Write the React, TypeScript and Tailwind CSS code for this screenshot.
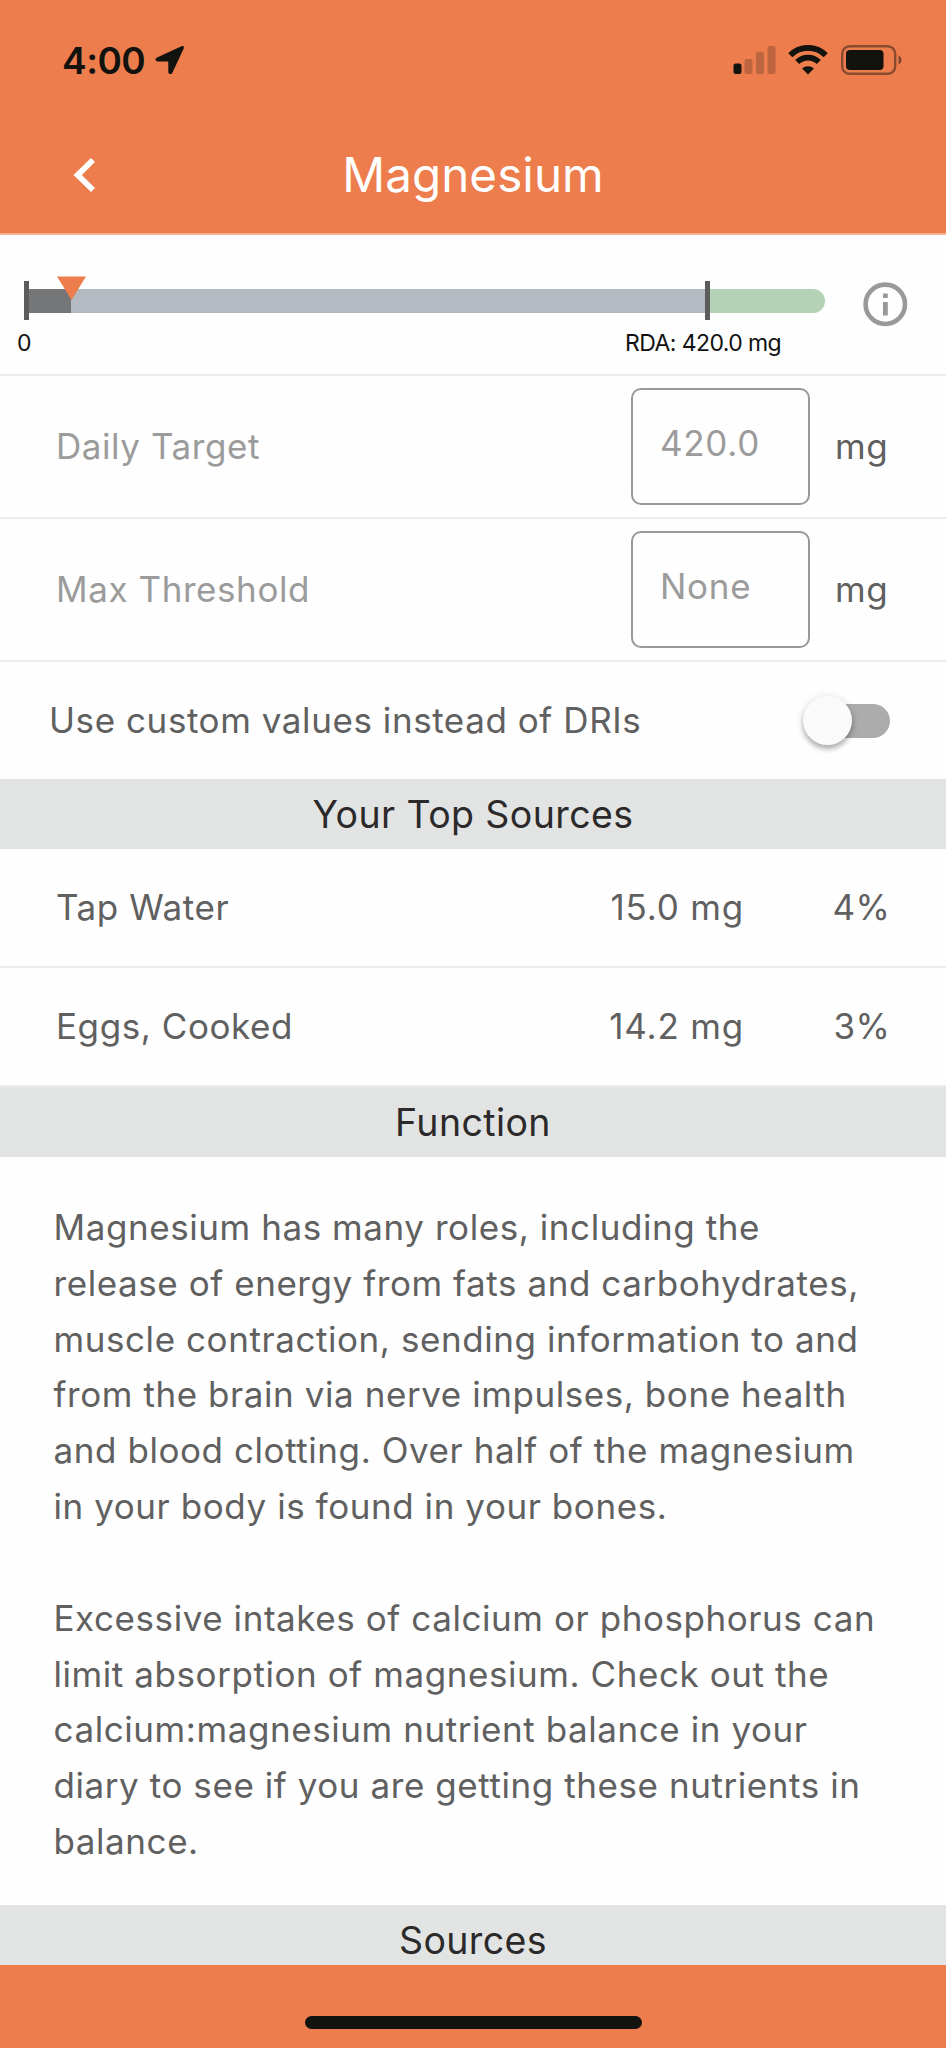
import { useState } from "react";
import clsx from "clsx";

const sources = [
  { name: "Tap Water", amount: "15.0 mg", percent: "4%" },
  { name: "Eggs, Cooked", amount: "14.2 mg", percent: "3%" },
];

const StatusBar = () => {
  return (
    <div className="flex h-[120px] items-center justify-between pl-[62px] pr-[43px] text-[#12120f]">
      <div className="flex items-center gap-[10px]">
        <span className="text-[37px] font-semibold leading-none tracking-[-0.5px]">4:00</span>
        <svg width="30" height="30" viewBox="0 0 30 30" fill="currentColor">
          <path d="M26.5 1.3 2 12.4C-.4 13.5.2 16.4 2.8 16.4H12.4C13 16.4 13.3 16.7 13.3 17.3V26.7C13.3 29.4 16.4 29.8 17.5 27.4L28.7 3.6C29.5 1.9 28.2.5 26.5 1.3Z" />
        </svg>
      </div>
      <div className="flex items-center">
        {/* Signal */}
        <svg width="43" height="30" viewBox="0 0 43 30" fill="currentColor">
          <rect x="0.5" y="18.5" width="8" height="10.5" rx="2" />
          <rect x="11.5" y="14" width="8" height="15" rx="2" opacity="0.22" />
          <rect x="23" y="7" width="8" height="22" rx="2" opacity="0.22" />
          <rect x="34.5" y="1" width="8" height="28" rx="2" opacity="0.22" />
        </svg>
        {/* Wifi */}
        <svg className="ml-[12px]" width="40" height="30" viewBox="0 0 40 30">
          <g fill="none" stroke="currentColor" strokeWidth="5.8">
            <path d="M2.3 10.2A25 25 0 0 1 37.7 10.2" />
            <path d="M9.2 17A15.3 15.3 0 0 1 30.8 17" />
          </g>
          <path fill="currentColor" d="M20 29.5 14.1 23.6A8.4 8.4 0 0 1 25.9 23.6Z" />
        </svg>
        {/* Battery */}
        <svg className="ml-[13px]" width="62" height="30" viewBox="0 0 62 30">
          <rect x="1.2" y="1.2" width="53" height="27.6" rx="7.5" fill="none" stroke="currentColor" strokeWidth="2.4" opacity="0.45" />
          <rect x="5" y="5" width="37.5" height="20" rx="4" fill="currentColor" />
          <path d="M57.5 10.5C61.5 12 61.5 18 57.5 19.5Z" fill="currentColor" opacity="0.5" />
        </svg>
      </div>
    </div>
  );
};

const Header = () => {
  return (
    <header className="h-[235px] border-b-2 border-[#f3b392] bg-[#ed7d4c]">
      <StatusBar />
      <div className="grid h-[109px] grid-cols-[120px_1fr_120px] items-center">
        <button className="pl-[73px]" aria-label="Back">
          <svg width="22" height="34" viewBox="0 0 22 34" fill="white">
            <path d="M18 0 22 4 8.8 17 22 30 18 34 .5 17Z" />
          </svg>
        </button>
        <h1 className="text-center text-[47.5px] leading-none tracking-[0.1px] text-white">Magnesium</h1>
      </div>
    </header>
  );
};

const NutrientMeter = () => {
  return (
    <div className="flex h-[141px] justify-between border-b-2 border-[#ececec] pr-[38px] text-[#111]">
      <div className="relative w-[830px] pt-[54px]">
        <div className="ml-[28px] flex h-[24px] w-[797px] overflow-hidden rounded-l-[9px] rounded-r-full">
          <div className="w-[43px] bg-[#757678]" />
          <div className="w-[636px] bg-[#b3bac2]" />
          <div className="flex-1 bg-[#b3d2b6]" />
        </div>
        {/* Range ticks and the marker over the bar */}
        <div className="absolute left-[24px] top-[46px] h-[39px] w-[5px] bg-[#5c5c5c]" />
        <div className="absolute left-[705px] top-[46px] h-[39px] w-[5px] bg-[#5c5c5c]" />
        <svg className="absolute left-[57px] top-[41px]" width="29" height="24" viewBox="0 0 29 24">
          <path d="M0 .5H29L14.5 24Z" fill="#ed7d4c" />
        </svg>
        <div className="mt-[18px] flex pl-[17px] text-[23px] leading-[24px]">
          <span className="w-[608px]">0</span>
          <span className="whitespace-nowrap tracking-[-0.58px]">RDA: 420.0 mg</span>
        </div>
      </div>
      <svg className="mt-[47px]" width="45" height="45" viewBox="0 0 45 45">
        <circle cx="22.3" cy="22.3" r="19.7" fill="none" stroke="#999" strokeWidth="4.6" />
        <path d="M20 11.5h4.8v4.6H20zM20 20h4.8v13.5H20z" fill="#999" />
      </svg>
    </div>
  );
};

const TargetRow = ({ label, value }: { label: string; value: string }) => {
  return (
    <div className="flex h-[143px] items-center border-b-2 border-[#ececec] pl-[56px] pr-[57px]">
      <span className="flex-1 text-[#9b9b9b]">{label}</span>
      <div className="flex h-[117px] w-[179px] items-center rounded-[10px] border-2 border-[#999] pb-[6px] pl-[27px] tracking-[0.7px] text-[#9b9b9b]">
        {value}
      </div>
      <span className="w-[79px] pl-[25px] tracking-[0.7px]">mg</span>
    </div>
  );
};

const CustomSwitch = () => {
  const [on, setOn] = useState(false);

  return (
    <div className="flex h-[117px] items-center justify-between pl-[49px] pr-[56px]">
      <span>Use custom values instead of DRIs</span>
      <button
        role="switch"
        aria-checked={on}
        aria-label="Use custom values"
        onClick={() => setOn(!on)}
        className={clsx("flex h-[34px] w-[84px] items-center rounded-full", on ? "justify-end bg-[#f3b392]" : "bg-[#acacac]")}
      >
        <span className="-ml-[3px] size-[49px] rounded-full bg-[#fafafa] shadow-[0_4px_5px_rgba(0,0,0,0.26),0_1px_10px_rgba(0,0,0,0.12)]" />
      </button>
    </div>
  );
};

const SectionTitle = ({ children }: { children: React.ReactNode }) => {
  return (
    <h2 className="h-[70px] bg-[#e2e4e3] text-center text-[37.5px] leading-[71px] tracking-[0.4px] text-[#2b2929]">
      {children}
    </h2>
  );
};

export default function App() {
  return (
    <div className="flex h-[2048px] w-[946px] flex-col overflow-hidden bg-[#fefefe] font-['Inter',sans-serif] text-[35px] leading-none tracking-[0.57px] text-[#606060]">
      <Header />
      <NutrientMeter />
      <TargetRow label="Daily Target" value="420.0" />
      <TargetRow label="Max Threshold" value="None" />
      <CustomSwitch />

      <SectionTitle>Your Top Sources</SectionTitle>
      {sources.map((item) => (
        <div key={item.name} className="flex h-[119px] items-center border-b-2 border-[#ececec] pl-[56px] pr-[56px]">
          <span className="flex-1">{item.name}</span>
          <span className="tracking-[0.8px]">{item.amount}</span>
          <span className="w-[146px] text-right tracking-[0.2px]">{item.percent}</span>
        </div>
      ))}

      <SectionTitle>Function</SectionTitle>
      <div className="h-[748px] space-y-[56px] pl-[53.5px] pr-[60px] pt-[43px] leading-[55.8px]">
        <p>
          Magnesium has many roles, including the release of energy from fats and carbohydrates, muscle
          contraction, sending information to and from the brain via nerve impulses, bone health and blood
          clotting. Over half of the magnesium in your body is found in your bones.
        </p>
        <p>
          Excessive intakes of calcium or phosphorus can limit absorption of magnesium. Check out the
          calcium:magnesium nutrient balance in your diary to see if you are getting these nutrients in
          balance.
        </p>
      </div>

      <div className="h-[60px] overflow-hidden">
        <SectionTitle>Sources</SectionTitle>
      </div>
      <footer className="flex h-[83px] justify-center bg-[#ed7d4c] pt-[51px]">
        <div className="h-[13px] w-[337px] rounded-full bg-[#12120f]" />
      </footer>
    </div>
  );
}
